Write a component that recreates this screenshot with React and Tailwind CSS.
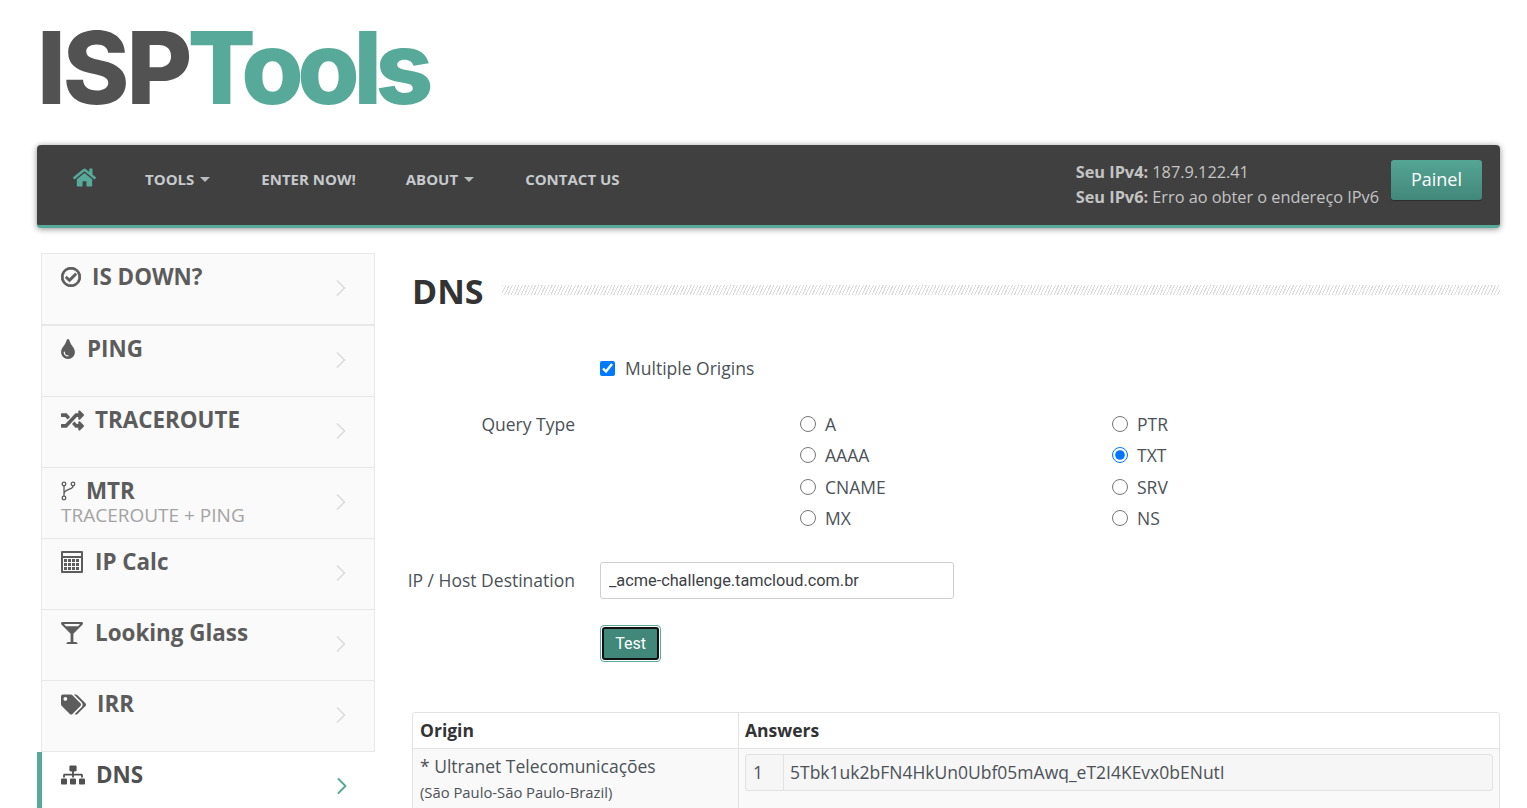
import React from 'react';
import { ChevronRight } from 'lucide-react';
import { FaHome, FaTint, FaRandom, FaGlassMartiniAlt, FaTags, FaSitemap, FaRegCheckCircle } from 'react-icons/fa';

const BranchIcon = () => (
    <svg width="15" height="20" viewBox="0 0 15 20" fill="none" stroke="currentColor" strokeWidth="1.3">
        <circle cx="3" cy="3" r="1.8" />
        <circle cx="3" cy="17" r="1.8" />
        <circle cx="12" cy="3" r="1.8" />
        <path d="M3 5v10M12 5c0 4-9 3-9 8" />
    </svg>
);

const CalcIcon = () => (
    <svg width="22" height="22" viewBox="0 0 22 22" fill="currentColor">
        <path fillRule="evenodd" d="M1 0h20a1 1 0 0 1 1 1v20a1 1 0 0 1-1 1H1a1 1 0 0 1-1-1V1a1 1 0 0 1 1-1zm1 2v3h18V2zm0 5v13h18V7z" />
        {[8, 12, 16].map(y => [3, 7, 11, 15].map(x => (
            <rect key={`${x}-${y}`} x={x} y={y} width="3" height="3" />
        )))}
    </svg>
);

const menu = [
    { title: 'IS DOWN?', icon: <FaRegCheckCircle size={20} stroke="currentColor" strokeWidth={24} />, gap: 'gap-[11px]', thick: true },
    { title: 'PING', icon: <FaTint size={20} className="ml-[-3px]" />, gap: 'gap-[9px]' },
    { title: 'TRACEROUTE', icon: <FaRandom size={23} />, gap: 'gap-[11px]' },
    { title: 'MTR', sub: 'TRACEROUTE + PING', icon: <BranchIcon />, gap: 'gap-[10px]' },
    { title: 'IP Calc', icon: <CalcIcon />, gap: 'gap-[12px]' },
    { title: 'Looking Glass', icon: <FaGlassMartiniAlt size={22} />, gap: 'gap-[12px]' },
    { title: 'IRR', icon: <FaTags size={25} />, gap: 'gap-[11px]' },
];

const radios = [
    ['A', 'PTR'],
    ['AAAA', 'TXT'],
    ['CNAME', 'SRV'],
    ['MX', 'NS'],
];

const SideItem = ({ item }) => (
    <div className={`flex justify-between border-x border-[#e8e8e8] bg-[#fafafa] pl-[19px] pr-[19px] ${item.thick ? 'h-[72px] border-b-2 border-b-[#e8e8e8]' : 'h-[71px] border-b'}`}>
        <div>
            <div className={`mt-[7px] flex h-[32px] items-center ${item.gap} text-[22.4px] font-bold text-[#5c5c5c]`}>
                <span className="flex items-center text-[#5c5c5c]">{item.icon}</span>
                <span>{item.title}</span>
            </div>
            {item.sub && <div className="mt-[-4px] text-[19px] leading-[24px] text-[#a3a3a3]">{item.sub}</div>}
        </div>
        <ChevronRight size={28} strokeWidth={1.5} className="mt-[20px] text-[#dcdcdc]" />
    </div>
);

const Radio = ({ label, checked }) => (
    <label className="flex h-[31.5px] items-center gap-[9px] text-[17.5px] text-[#4c5257]">
        <input type="radio" name="type" defaultChecked={checked} className="m-0 h-[16px] w-[16px] accent-[#0075ff]" />
        {label}
    </label>
);

export default function App() {
    return (
        <div className="h-[808px] w-full overflow-hidden bg-white font-['Open_Sans',sans-serif] text-[#4c5257]">
            <div className="flex h-[145px] pl-[37px] pt-[7px]">
                <div className="flex h-[120px] items-center font-['Inter',sans-serif] text-[101px] font-extrabold leading-none">
                    <span className="tracking-[-3px] text-[#525252]">ISP</span>
                    <span className="ml-[-2px] tracking-[-6.5px] text-[#57a999]">Tools</span>
                </div>
            </div>

            <nav className="ml-[37px] flex h-[83px] w-[1463px] items-start justify-between rounded-[4px] border-b-[3px] border-[#57a999] bg-[#404040] shadow-[0_1px_6px_rgba(0,0,0,0.45)]">
                <div className="flex items-center pl-[36px] pt-[23px] text-[15px] font-bold uppercase text-[#c6cacd]">
                    <FaHome size={23} className="mt-[-4px] text-[#57a999]" />
                    <span className="ml-[49px] flex items-center gap-[6px]">Tools <span className="mt-[1px] border-x-[5px] border-t-[5px] border-x-transparent border-t-[#b9bdc0]" /></span>
                    <span className="ml-[51px]">Enter Now!</span>
                    <span className="ml-[50px] flex items-center gap-[6px]">About <span className="mt-[1px] border-x-[5px] border-t-[5px] border-x-transparent border-t-[#b9bdc0]" /></span>
                    <span className="ml-[51px]">Contact Us</span>
                </div>
                <div className="flex items-start pr-[18px] pt-[15px]">
                    <div className="text-[16.3px] leading-[25px] text-[#c4c4c4]">
                        <div><b>Seu IPv4:</b> 187.9.122.41</div>
                        <div><b>Seu IPv6:</b> Erro ao obter o endereço IPv6</div>
                    </div>
                    <button className="ml-[12px] h-[40px] w-[91px] rounded-[3px] bg-gradient-to-b from-[#55a595] to-[#42887a] pb-[2px] text-[18px] text-white shadow-[0_1px_1px_rgba(0,0,0,0.3)]">Painel</button>
                </div>
            </nav>

            <div className="mt-[25px] flex items-start">
                <aside className="ml-[37px] w-[338px] pl-[4px]">
                    <div className="border-t border-[#e8e8e8]" />
                    {menu.map(item => <SideItem key={item.title} item={item} />)}
                    <div className="ml-[-4px] flex h-[71px] justify-between border-l-[5px] border-[#57a999] bg-white pl-[19px] pr-[19px]">
                        <div className="mt-[7px] flex h-[32px] items-center gap-[11px] text-[22.4px] font-bold text-[#505050]">
                            <FaSitemap size={24} />
                            <span>DNS</span>
                        </div>
                        <ChevronRight size={28} strokeWidth={1.7} className="mt-[20px] text-[#57a999]" />
                    </div>
                </aside>

                <main className="ml-[37px] w-[1088px]">
                    <div className="flex h-[76px] items-start pt-[14px]">
                        <h1 className="text-[34px] font-bold leading-[48px] text-[#333]">DNS</h1>
                        <div className="ml-[18px] mt-[18px] h-[10px] flex-1 bg-[repeating-linear-gradient(115deg,#dcdcdc_0,#dcdcdc_1px,#fff_1px,#fff_3px)]" />
                    </div>

                    <label className="ml-[188px] mt-[24px] flex h-[30px] items-center gap-[10px] text-[17.5px]">
                        <input type="checkbox" defaultChecked className="m-0 h-[15px] w-[15px] accent-[#007bff]" />
                        Multiple Origins
                    </label>

                    <div className="mt-[25px] flex">
                        <div className="w-[163px] pt-[3px] text-right text-[17.5px]">Query Type</div>
                        <div className="ml-[225px] grid w-[624px] grid-cols-[312px_312px]">
                            {radios.map(([a, b]) => (
                                <React.Fragment key={a}>
                                    <Radio label={a} />
                                    <Radio label={b} checked={b === 'TXT'} />
                                </React.Fragment>
                            ))}
                        </div>
                    </div>

                    <div className="mt-[28px] flex items-center">
                        <div className="flex w-[163px] justify-end whitespace-nowrap text-[17.5px]"><span>IP / Host Destination</span></div>
                        <input readOnly value="_acme-challenge.tamcloud.com.br" className="ml-[25px] h-[37px] w-[354px] rounded-[3px] border border-[#cfcfcf] bg-white pl-[8px] font-['Roboto',sans-serif] text-[16.3px] text-[#3c4146] outline-none" />
                    </div>

                    <button className="ml-[188px] mt-[26px] block h-[37px] w-[61px] rounded-[4px] border border-[#57a999] bg-white p-[1px]">
                        <span className="flex h-full w-full items-center justify-center rounded-[3px] border-2 border-[#111] bg-[#42887a] font-['Roboto',sans-serif] text-[16px] text-white">Test</span>
                    </button>

                    <div className="mt-[50px] overflow-hidden rounded-t-[3px] border border-[#e2e2e2]">
                        <div className="flex h-[36px] items-center border-b border-[#e2e2e2] text-[17.5px] font-bold text-[#333]">
                            <div className="flex h-full w-[326px] items-center border-r border-[#e2e2e2] pl-[7px]">Origin</div>
                            <div className="pl-[6px]">Answers</div>
                        </div>
                        <div className="flex h-[120px] bg-[#f9f9f9]">
                            <div className="w-[326px] border-r border-[#e2e2e2] pl-[7px] pt-[3px]">
                                <div className="text-[17.5px] leading-[28px]">* Ultranet Telecomunicações</div>
                                <div className="text-[14.8px] leading-[24px]">(São Paulo-São Paulo-Brazil)</div>
                            </div>
                            <div className="flex-1 px-[6px] pt-[5px]">
                                <div className="flex h-[37px] items-center rounded-[3px] border border-[#e2e2e2] bg-[#f6f6f6] text-[17.5px]">
                                    <div className="flex h-full w-[38px] items-center border-r border-[#e2e2e2] pl-[7px]">1</div>
                                    <div className="pl-[6px]">5Tbk1uk2bFN4HkUn0Ubf05mAwq_eT2I4KEvx0bENutI</div>
                                </div>
                            </div>
                        </div>
                    </div>
                </main>
            </div>
        </div>
    );
}
